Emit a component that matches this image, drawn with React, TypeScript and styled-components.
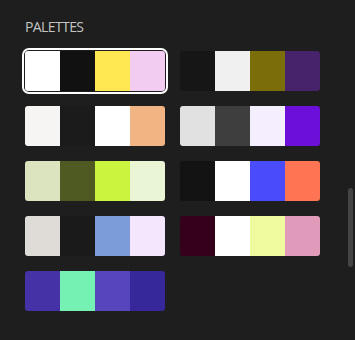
import React from "react";
import styled, { createGlobalStyle } from "styled-components";

const Global = createGlobalStyle`
  html, body { margin: 0; padding: 0; background: #1e1e1e; }
  body { font-family: "Open Sans", "Noto Sans", sans-serif; overflow: hidden; }
`;

const Page = styled.div`
  position: relative;
  width: 355px;
  height: 340px;
  box-sizing: border-box;
  padding: 18px 0 0 25px;
  background: #1e1e1e;
`;

const Title = styled.h2`
  margin: 0 0 16px 0;
  font-size: 14px;
  font-weight: 400;
  color: #c4c4c4;
  letter-spacing: -0.6px;
  line-height: 17px;
`;

const Grid = styled.div`
  display: grid;
  grid-template-columns: 140px 140px;
  column-gap: 15px;
  row-gap: 15px;
`;

const CardWrap = styled.div<{ $selected?: boolean }>`
  border-radius: 4px;
  ${(p) => (p.$selected ? "outline: 2px solid #fff; outline-offset: 1px;" : "")}
`;

const Card = styled.div`
  display: grid;
  grid-template-columns: repeat(4, 35px);
  height: 40px;
  border-radius: 3px;
  overflow: hidden;
`;

const Swatch = styled.div<{ $c: string }>`
  background: ${(p) => p.$c};
`;

const Scrollbar = styled.div`
  position: absolute;
  left: 348px;
  top: 188px;
  width: 5px;
  height: 79px;
  border-radius: 3px;
  background: #444444;
`;

const palettes: string[][] = [
  ["#ffffff", "#111111", "#ffe852", "#f2cdf1"],
  ["#161616", "#f0f0f0", "#7a6d0a", "#46236b"],
  ["#f6f5f3", "#1b1b1b", "#ffffff", "#f3b484"],
  ["#e1e1e1", "#3e3e3e", "#f4eeff", "#6b0fd9"],
  ["#dbe4bf", "#4f5a23", "#cbf43f", "#eaf5d6"],
  ["#131313", "#ffffff", "#4a4cfb", "#ff7554"],
  ["#dfdcd8", "#1a1a1a", "#7b9cd9", "#f4e6fc"],
  ["#36001a", "#ffffff", "#f0fa9f", "#df9bb9"],
  ["#4432a6", "#76f1b4", "#5645bd", "#36289a"],
];

export default function App() {
  return (
    <>
      <Global />
      <Page>
        <Title>PALETTES</Title>
        <Grid>
          {palettes.map((p, i) => (
            <CardWrap key={i} $selected={i === 0}>
              <Card>
                {p.map((c, j) => (
                  <Swatch key={j} $c={c} />
                ))}
              </Card>
            </CardWrap>
          ))}
        </Grid>
        <Scrollbar />
      </Page>
    </>
  );
}
